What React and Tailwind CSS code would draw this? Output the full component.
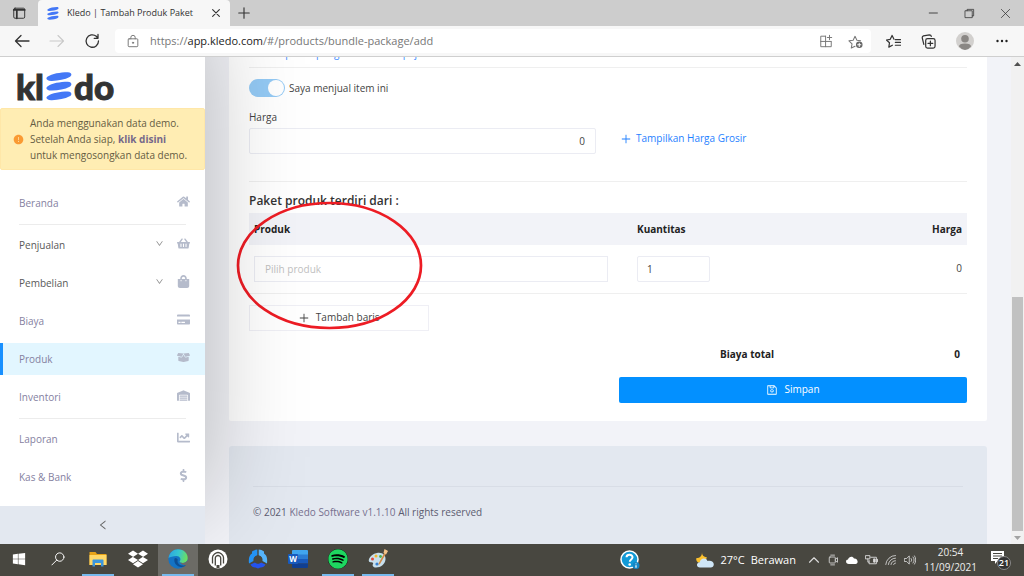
import { AiFillExclamationCircle, AiOutlineDown, AiOutlineLeft, AiOutlinePlus, AiOutlineSave } from 'react-icons/ai'
import {
  FaBoxOpen,
  FaChartLine,
  FaCreditCard,
  FaDollarSign,
  FaDropbox,
  FaHome,
  FaShoppingBag,
  FaShoppingBasket,
  FaSpotify,
  FaWarehouse,
  FaWindows,
} from 'react-icons/fa'

const NAV_GROUPS = [
  [{ label: 'Beranda', icon: FaHome }],
  [
    { label: 'Penjualan', icon: FaShoppingBasket, expandable: true },
    { label: 'Pembelian', icon: FaShoppingBag, expandable: true },
    { label: 'Biaya', icon: FaCreditCard },
    { label: 'Produk', icon: FaBoxOpen, active: true },
    { label: 'Inventori', icon: FaWarehouse },
  ],
  [
    { label: 'Laporan', icon: FaChartLine },
    { label: 'Kas & Bank', icon: FaDollarSign },
  ],
]

function KledoBars({ className }) {
  return (
    <svg className={className} viewBox="0 0 26 30" fill="#4478f6" aria-hidden="true">
      <path d="M1 5C6 1.500 14 .4 22 .2c4.500-.1 4.800 3.600 2 5C19 7.800 12 9.300 5 9.200-.2 9.100-1 6.600 1 5Z" />
      <path d="M1 15C6 11.500 14 10.400 22 10.200c4.500-.1 4.800 3.600 2 5C19 17.800 12 19.300 5 19.200-.2 19.100-1 16.600 1 15Z" />
      <path d="M1 25C6 21.500 14 20.400 22 20.200c4.500-.1 4.800 3.600 2 5C19 27.800 12 29.300 5 29.200-.2 29.100-1 26.600 1 25Z" />
    </svg>
  )
}

function LineIcon({ className = 'size-4', children }) {
  return (
    <svg className={className} viewBox="0 0 16 16" fill="none" stroke="currentColor" strokeWidth="1.1" strokeLinecap="round" strokeLinejoin="round" aria-hidden="true">
      {children}
    </svg>
  )
}

function TitleBar() {
  return (
    <div className="flex h-[26px] shrink-0 items-stretch bg-[#cdcdcd] text-[#333]">
      <button aria-label="Tab actions" className="flex w-[38px] items-center justify-center">
        <LineIcon className="size-[14px]">
          <rect x="2" y="2.500" width="12.500" height="11.500" rx="1.500" />
          <path d="M2 4.500h12.500M5.500 5v9" strokeWidth="2" />
        </LineIcon>
      </button>
      <div className="flex w-48 items-center rounded-t-[4px] bg-[#f7f7f7] pl-[9px] pr-2">
        <KledoBars className="h-[13px] w-3" />
        <span className="ml-2 flex-1 whitespace-nowrap text-[9px]">Kledo | Tambah Produk Paket</span>
        <button aria-label="Close tab">
          <LineIcon className="size-3">
            <path d="m3.500 3.500 9 9M12.500 3.500l-9 9" strokeWidth="1.500" />
          </LineIcon>
        </button>
      </div>
      <button aria-label="New tab" className="flex w-[27px] items-center justify-center">
        <LineIcon className="size-[14px]">
          <path d="M8 2v12M2 8h12" strokeWidth="1.300" />
        </LineIcon>
      </button>
      <div className="ml-auto flex">
        <button aria-label="Minimize" className="flex w-9 items-center justify-center">
          <LineIcon className="size-[10px]"><path d="M2 8h13" strokeWidth="1.400" /></LineIcon>
        </button>
        <button aria-label="Restore" className="flex w-9 items-center justify-center">
          <LineIcon className="size-[11px]">
            <rect x="2" y="4" width="10" height="10" />
            <path d="M4.500 4V2H14v9.500h-2" />
          </LineIcon>
        </button>
        <button aria-label="Close" className="flex w-[37px] items-center justify-center">
          <LineIcon className="size-[11px]"><path d="m2 2 12 12M14 2 2 14" /></LineIcon>
        </button>
      </div>
    </div>
  )
}

function Toolbar() {
  return (
    <div className="flex h-[31px] shrink-0 items-center border-b border-[#cfcfcf] bg-[#f7f7f7] text-[#333]">
      <div className="flex w-[115px] items-center gap-[19px] pl-[14px]">
        <button aria-label="Back">
          <LineIcon><path d="M15 8H2M7 2.500 1.500 8 7 13.500" strokeWidth="1.300" /></LineIcon>
        </button>
        <button aria-label="Forward" className="text-[#c9c9c9]">
          <LineIcon><path d="M1 8h13M9 2.500 14.500 8 9 13.500" /></LineIcon>
        </button>
        <button aria-label="Refresh">
          <LineIcon>
            <path d="M14.500 8a6.200 6.200 0 1 1-2.200-4.700L14 5.200M14 1.500v3.800h-3.800" strokeWidth="1.300" />
          </LineIcon>
        </button>
      </div>
      <div className="flex h-6 flex-1 items-center rounded-[4px] bg-white pl-[11px] pr-2 text-[#777]">
        <LineIcon className="size-[14px]">
          <rect x="2.500" y="5.500" width="11" height="9" rx="1" />
          <path d="M5.500 5.500V4a2.500 2.500 0 0 1 5 0v1.500" />
          <circle cx="8" cy="10" r=".7" fill="currentColor" />
        </LineIcon>
        <span className="ml-[10px] flex-1 whitespace-nowrap text-[11px]">
          https://<span className="text-[#222]">app.kledo.com</span>/#/products/bundle-package/add
        </span>
        <button aria-label="Install app">
          <LineIcon className="size-[14px]">
            <path d="M7.500 2.500h-5.500v12h12V9M2 8.500h12M7.500 2.500v12M12 1.500v5M9.500 4h5" />
          </LineIcon>
        </button>
        <button aria-label="Add to favorites" className="ml-[15px]">
          <LineIcon className="size-[15px]">
            <path d="M7.500 13 3.500 15l.8-4.500L1 7.300l4.500-.7 2-4.100 2 4.100 4 .6" />
            <circle cx="12" cy="11.500" r="3.500" fill="#666" stroke="none" />
            <path d="M12 9.800v3.400M10.300 11.500h3.400" stroke="#fff" />
          </LineIcon>
        </button>
      </div>
      <div className="flex items-center pl-[15px] pr-4">
        <button aria-label="Favorites">
          <LineIcon className="size-[15px]">
            <path d="M8.500 5.500 6.500 1.500l-2 4.200-4 .7 3.200 3-.7 4.600 3.800-2M10 6h5.500M10 9h5.500M10 12h5.500" strokeWidth="1.300" />
          </LineIcon>
        </button>
        <button aria-label="Collections" className="ml-5">
          <LineIcon className="size-[15px]">
            <rect x="5" y="5" width="10" height="10" rx="2" strokeWidth="1.300" />
            <path d="M10 7.500v5M7.500 10h5M3 11 1.300 4A2 2 0 0 1 2.600 2L9 1c1 0 1.800.5 2 1.600" strokeWidth="1.300" />
          </LineIcon>
        </button>
        <button aria-label="Profile" className="ml-5">
          <svg className="size-[18px]" viewBox="0 0 18 18" aria-hidden="true">
            <circle cx="9" cy="9" r="9" fill="#d2d0ce" />
            <circle cx="9" cy="6.800" r="3.800" fill="#8a8784" />
            <path d="M3 14.500c0-2 2-3 6-3s6 1 6 3A9 9 0 0 1 9 18a9 9 0 0 1-6-3.500Z" fill="#8a8784" />
          </svg>
        </button>
        <button aria-label="Settings" className="ml-[22px]">
          <svg className="h-3 w-3" viewBox="0 0 12 12" fill="#222" aria-hidden="true">
            <circle cx="1.500" cy="6" r="1.200" />
            <circle cx="6" cy="6" r="1.200" />
            <circle cx="10.500" cy="6" r="1.200" />
          </svg>
        </button>
      </div>
    </div>
  )
}

function NavItem({ item }) {
  const Icon = item.icon
  return (
    <li>
      <a
        href="#"
        className={`flex h-8 items-center border-l-[3px] pl-4 pr-[15px] ${
          item.active ? 'border-[#1890ff] bg-[#e2f6ff]' : 'border-transparent'
        } ${item.expandable ? 'text-[#595959]' : 'text-[#85819f]'}`}
      >
        <span className="flex-1">{item.label}</span>
        {item.expandable && <AiOutlineDown className="mr-[13px] mb-1 size-[9px] text-[#888]" />}
        <Icon className="mb-1 size-[13px] text-[#b5bbcb]" />
      </a>
    </li>
  )
}

function Sidebar() {
  return (
    <aside className="relative z-10 flex w-[205px] shrink-0 flex-col bg-white shadow-[0_-40px_100px_rgba(0,0,0,0.26)]">
      <a href="#" aria-label="kledo" className="flex h-[51px] items-center pl-4 pt-2 font-[Lato] text-[35px] leading-none font-black text-[#333] [-webkit-text-stroke:1px_#333]">
        kl
        <KledoBars className="mx-[2px] h-[29px] w-[26px]" />
        do
      </a>
      <div className="flex items-center rounded-[2px] border border-[#ffe7a8] bg-[#ffedb3] py-[6px] pl-3 text-[#655c43]">
        <AiFillExclamationCircle className="size-[11px] shrink-0 text-[#fa9a33]" />
        <p className="ml-[6px] leading-4 whitespace-nowrap">
          Anda menggunakan data demo.
          <br />
          Setelah Anda siap, <a href="#" className="font-bold text-[#75698a]">klik disini</a>
          <br />
          untuk mengosongkan data demo.
        </p>
      </div>
      <nav className="flex-1 pt-[17px]">
        {NAV_GROUPS.map((group, i) => (
          <div key={i}>
            {i > 0 && <hr className="mx-[19px] mt-[5px] mb-1 border-[#ececec]" />}
            <ul className="flex flex-col gap-[6px]">
              {group.map(item => (
                <NavItem key={item.label} item={item} />
              ))}
            </ul>
          </div>
        ))}
      </nav>
      <button aria-label="Collapse menu" className="flex h-[38px] items-center justify-center bg-[#e3e8f0] text-[#666]">
        <AiOutlineLeft className="size-3" />
      </button>
    </aside>
  )
}

function BundleForm() {
  return (
    <form className="rounded-b-[2px] bg-white px-5 pb-[18px]" onSubmit={e => e.preventDefault()}>
      <a href="#" className="-mt-3 block h-[23px] border-b border-[#efefef] pl-4 leading-4 text-[#3b8bff]">
        Tampilkan pengaturan untuk pajak
      </a>
      <label className="mt-[11px] flex items-center gap-1">
        <input type="checkbox" role="switch" defaultChecked className="peer sr-only" />
        <span className="flex h-[18px] w-9 items-center justify-end rounded-full bg-[#94caf5] p-px">
          <span className="size-4 rounded-full bg-white" />
        </span>
        Saya menjual item ini
      </label>
      <div className="mt-3 grid grid-cols-2 gap-6">
        <div>
          <label htmlFor="price" className="block leading-4">Harga</label>
          <input id="price" defaultValue="0" className="mt-[3px] block h-[26px] w-full rounded-[2px] border border-[#ebecf3] bg-transparent px-[10px] text-right" />
        </div>
        <button type="button" className="flex items-center gap-1 self-end pb-2 text-[#1f7fff]">
          <AiOutlinePlus className="size-3" />
          Tampilkan Harga Grosir
        </button>
      </div>
      <hr className="mt-[27px] border-[#efefef]" />
      <h2 className="mt-[9px] text-[12px] leading-5 font-semibold text-[#333]">Paket produk terdiri dari :</h2>
      <table className="mt-[2px] w-full table-fixed">
        <thead>
          <tr className="h-8 bg-[#f2f3f8] text-[#222]">
            <th className="w-[383px] px-[5px] text-left">Produk</th>
            <th className="px-[5px] text-left">Kuantitas</th>
            <th className="px-[5px] text-right">Harga</th>
          </tr>
        </thead>
        <tbody>
          <tr className="h-12 border-b border-[#efefef]">
            <td className="pl-[5px] pr-6">
              <input aria-label="Produk" placeholder="Pilih produk" className="block h-[26px] w-full border border-[#ebecf3] bg-transparent px-[10px] placeholder:text-[#bfbfbf]" />
            </td>
            <td className="px-[5px]">
              <input aria-label="Kuantitas" defaultValue="1" className="block h-[26px] w-[73px] rounded-[2px] border border-[#ebecf3] px-[9px]" />
            </td>
            <td className="px-[5px] text-right">0</td>
          </tr>
        </tbody>
      </table>
      <button type="button" className="mt-[11px] flex h-[26px] w-1/4 items-center justify-center gap-[6px] border border-[#efeff5]">
        <AiOutlinePlus className="size-3" />
        Tambah baris
      </button>
      <div className="ml-auto w-[348px]">
        <div className="mt-[15px] flex justify-between pl-[101px] pr-[7px] leading-4 font-bold text-[#222]">
          <span>Biaya total</span>
          <span>0</span>
        </div>
        <button className="mt-[15px] flex h-[26px] w-full items-center justify-center gap-[6px] rounded-[2px] bg-[#0390ff] text-white">
          <AiOutlineSave className="size-3" />
          Simpan
        </button>
      </div>
    </form>
  )
}

function Scrollbar() {
  return (
    <div className="flex w-[13px] shrink-0 flex-col items-center bg-[#f1f1f1]">
      <svg className="h-[13px] w-[7px]" viewBox="0 0 7 13" aria-hidden="true"><path d="M0 9h7L3.500 5Z" fill="#505050" /></svg>
      <div className="flex-1" />
      <div className="h-[48%] w-[11px] bg-[#c1c1c1]" />
      <svg className="h-[13px] w-[7px]" viewBox="0 0 7 13" aria-hidden="true"><path d="M0 5h7L3.500 9Z" fill="#a3a3a3" /></svg>
    </div>
  )
}

function EdgeIcon() {
  return (
    <svg className="size-5" viewBox="0 0 20 20" aria-hidden="true">
      <defs>
        <linearGradient id="edge-top" x1="0" x2="1" y1=".3" y2=".5">
          <stop offset="0" stopColor="#2da5e0" />
          <stop offset=".5" stopColor="#36c6d0" />
          <stop offset="1" stopColor="#6fe05a" />
        </linearGradient>
      </defs>
      <circle cx="10" cy="10" r="9.700" fill="#1473c4" />
      <path d="M.5 9C1.500 3.500 5.500.3 10 .3c6 0 9.700 4.200 9.700 8.700 0 3.500-2.500 5-5 5-2 0-3.500-.8-3-1.700 1.700-2 .3-5.300-3.200-5.300-3.500 0-6.500 1-8 2Z" fill="url(#edge-top)" />
      <path d="M6.500 9.500c-1 4 2 8.500 7 8.500 2 0 3.700-1 4.500-2-1 .5-2.500.9-4.300.5-3.200-.6-4.900-3.300-3.900-5.700C9 9 7.500 8.300 6.500 9.500Z" fill="#0d4f94" />
      <path d="M11.700 12.300c-.5.900 1 1.700 3 1.700 1.500 0 3.400-.8 4.300-2h1v2.500l-2.300 1.500c-2.500.5-5.500-.7-6-3.700Z" fill="#6c6b66" />
    </svg>
  )
}

function FolderIcon() {
  return (
    <svg className="h-4 w-[18px]" viewBox="0 0 18 16" aria-hidden="true">
      <path d="M.5 1h6l1.500 2h9.500v11H.5Z" fill="#e8a317" />
      <path d="M.5 4h17v10H.5Z" fill="#ffd868" />
      <path d="M3.500 15.500V9.500c0-.6.400-1 1-1h9c.6 0 1 .4 1 1v6H12v-3.500H6v3.500Z" fill="#3c96dc" />
    </svg>
  )
}

function WordIcon() {
  return (
    <svg className="h-[18px] w-5" viewBox="0 0 20 18" aria-hidden="true">
      <path d="M5 0h14a1 1 0 0 1 1 1v4H4V1a1 1 0 0 1 1-1Z" fill="#41a5ee" />
      <path d="M4 4.500h16V9H4Z" fill="#2b7cd3" />
      <path d="M4 9h16v4.500H4Z" fill="#185abd" />
      <path d="M4 13.500h16V17a1 1 0 0 1-1 1H5a1 1 0 0 1-1-1Z" fill="#103f91" />
      <rect y="4" width="10" height="10" rx="1" fill="#185abd" />
      <text x="5" y="12" textAnchor="middle" fill="#fff" fontSize="8" fontWeight="700" fontFamily="Open Sans">W</text>
    </svg>
  )
}

function PaletteIcon() {
  return (
    <svg className="size-5" viewBox="0 0 20 20" aria-hidden="true">
      <path d="M9 4c5-1 9 2 8.500 6.500C17 15 13 18.500 8 18.500c-3 0-4-2-3-3.500.7-1.200-.5-2-2-1.800C1 13.500.3 12 1 10c1-3 4-5.300 8-6Z" fill="#c7dfec" />
      <circle cx="4.500" cy="10" r="1.500" fill="#e2483d" />
      <circle cx="8" cy="7" r="1.500" fill="#f4b52d" />
      <circle cx="12.500" cy="7.500" r="1.400" fill="#4caf50" />
      <circle cx="9" cy="15" r="1.600" fill="#367fd0" />
      <path d="m18 1 1.500 1-7.500 13-1.500 1 .3-2Z" fill="#d38b45" />
      <path d="M16.500 0 20 2l-2 3.500-2.500-1.500Z" fill="#f1c28a" />
    </svg>
  )
}

const TASKS = [
  { label: 'Start', icon: <FaWindows className="size-[14px]" /> },
  {
    label: 'Search',
    icon: (
      <LineIcon className="size-[14px]">
        <circle cx="10" cy="5.800" r="4.800" />
        <path d="m6.500 9.300-5.500 5.500" />
      </LineIcon>
    ),
  },
  { label: 'File Explorer', icon: <FolderIcon />, open: true },
  { label: 'Dropbox', icon: <FaDropbox className="size-5" /> },
  { label: 'Edge', icon: <EdgeIcon />, open: true, active: true },
  {
    label: 'Home app',
    icon: (
      <svg className="size-5" viewBox="0 0 20 20" fill="none" aria-hidden="true">
        <circle cx="10" cy="10" r="9.500" fill="#fff" />
        <path d="M4.500 14.500V8.500C4.500 6 8 3.500 10 3.500s5.500 2.500 5.500 5v6" stroke="#484740" strokeWidth="1.300" />
        <path d="M7.300 16.500V9c0-1.400 1.600-2.500 2.700-2.500S12.700 7.600 12.700 9v7.500" stroke="#484740" strokeWidth="1.300" />
        <path d="M8.500 19v-3h3v3Z" fill="#484740" />
      </svg>
    ),
  },
  {
    label: 'Hub',
    icon: (
      <svg className="size-5" viewBox="0 0 20 20" aria-hidden="true">
        <path d="M9.300.5v5.700A5 5 0 0 0 5.500 12L1 14.500C.3 9 1.500 6 4 4.500V2.500C5.500 1.300 7.500.5 9.300.5Z" fill="#2493f5" />
        <path d="M10.700.5v5.700a5 5 0 0 1 3.800 5.800l4.500 2.500c.7-5.500-.5-8.500-3-10V2.500C14.500 1.300 12.500.5 10.700.5Z" fill="#55b4fb" />
        <path d="m2.500 15.500 4.500-2c2 1.600 4 1.600 6 0l4.500 2c-1 2-3 3.200-5 3l-2.500 1-2.500-1c-2 .2-4-1-5-3Z" fill="#2453ee" />
        <circle cx="10" cy="10.500" r="3.800" fill="#484740" />
      </svg>
    ),
  },
  { label: 'Word', icon: <WordIcon /> },
  {
    label: 'Spotify',
    icon: (
      <span className="rounded-full bg-black">
        <FaSpotify className="size-5 text-[#1ed760]" />
      </span>
    ),
    open: true,
  },
  { label: 'Paint', icon: <PaletteIcon />, open: true },
]

function Taskbar() {
  return (
    <footer className="flex h-8 shrink-0 bg-[#484740] text-white">
      {TASKS.map(task => (
        <button
          key={task.label}
          aria-label={task.label}
          className={`flex w-10 items-center justify-center first:w-[38px] ${task.active ? 'bg-[#6c6b66]' : ''}`}
        >
          <span className={`flex h-full w-8 items-center justify-center border-b-2 ${task.open ? 'border-[#76b9ed]' : 'border-transparent'}`}>
            {task.icon}
          </span>
        </button>
      ))}
      <div className="ml-auto flex items-center">
        <button aria-label="Help" className="mr-14">
          <svg className="size-5" viewBox="0 0 20 20" aria-hidden="true">
            <circle cx="9.500" cy="9.500" r="8.500" fill="#129ad7" stroke="#fff" strokeWidth="1.500" />
            <path d="M6.500 7.300c.2-3.500 6.300-3.300 6 .2-.2 2-2.700 2-2.700 4.300" fill="none" stroke="#fff" strokeWidth="2" />
            <circle cx="9.700" cy="14.500" r="1.300" fill="#fff" />
            <circle cx="16" cy="15.500" r="3.500" fill="#1486c4" />
            <path d="M16 13.500v.8M16 15.300v2.500" stroke="#fff" strokeWidth="1.200" />
          </svg>
        </button>
        <button className="flex items-center text-[11px] whitespace-nowrap">
          <svg className="mr-[6px] h-4 w-[18px]" viewBox="0 0 18 16" aria-hidden="true">
            <path d="M6 0c-.3 3 1.500 5 5 5.500L8 11l-6-.5C0 9 0 7 .5 6 4 6 6 4 6 0Z" fill="#fbc02d" />
            <path d="M4 15.500c-4 0-4-5-.2-5.200C4.500 6 10 5.300 11.500 9c3-1 6.500.5 6.300 3.500-.1 2-1.300 3-3 3Z" fill="#cfe6f7" />
          </svg>
          27°C
          <span className="ml-[6px]">Berawan</span>
        </button>
        <div className="ml-3 flex items-center gap-[7px] text-[#ddd]">
          <LineIcon className="size-3"><path d="m2 11 6-6 6 6" strokeWidth="1.500" /></LineIcon>
          <LineIcon className="size-3">
            <rect x="3" y="4" width="8" height="8" rx="1" />
            <path d="m11 7 3-2v6l-3-2M5 1.500h5M5 14.500h5" />
          </LineIcon>
          <svg className="h-2 w-3" viewBox="0 0 12 8" fill="#fff" aria-hidden="true">
            <path d="M3 8C-.8 8-.7 3.500 2 3.500 3 0 7 0 8 2.500c4-.5 5 5.500 1.500 5.500Z" />
          </svg>
          <LineIcon className="size-[13px]">
            <path d="M1 2h5v4H1ZM3.500 6v4H5M7 4h7v8H5V8" />
            <path d="M14.500 6.500h1v3h-1M11 6h1.500v4H11Z" fill="currentColor" />
          </LineIcon>
          <LineIcon className="size-3">
            <path d="M1 14A13 13 0 0 1 14 2M4.500 14A9.500 9.500 0 0 1 14 5.500M8 14a6 6 0 0 1 6-5M11.500 14a2.500 2.500 0 0 1 2.500-2" />
          </LineIcon>
          <LineIcon className="size-3">
            <path d="M1 6h2.500L7 2.500v11L3.500 10H1ZM9.500 6c1 1.300 1 2.700 0 4M12 4c2 2.500 2 5.500 0 8M14 2.500c2.300 3.500 2.300 7.500 0 11" />
          </LineIcon>
        </div>
        <time className="ml-2 text-center text-[10px] leading-[15px] text-[#eee]">
          20:54
          <br />
          11/09/2021
        </time>
        <button aria-label="Notifications" className="relative mr-5 ml-[14px] pb-[6px]">
          <svg className="h-[13px] w-[13px]" viewBox="0 0 13 13" aria-hidden="true">
            <path d="M0 0h13v10H6.500L4 13v-3H0Z" fill="#fff" />
            <path d="M2 2.500h9M2 5h9M2 7.500h5" stroke="#484740" />
          </svg>
          <span className="absolute top-[5px] left-[6px] flex size-[14px] items-center justify-center rounded-full border border-[#888] bg-[#333] text-[9px] font-semibold">
            21
          </span>
        </button>
      </div>
    </footer>
  )
}

export default function App() {
  return (
    <div className="flex h-screen flex-col overflow-hidden font-['Open_Sans','Noto_Sans',sans-serif] text-[10px] text-[#444]">
      <TitleBar />
      <Toolbar />
      <div className="relative flex min-h-0 flex-1 overflow-hidden bg-[#f2f3f8]">
        <Sidebar />
        <main className="relative flex min-w-0 flex-1 flex-col overflow-hidden px-6">
          <BundleForm />
          <div className="mt-[25px] flex-1 rounded-t-[3px] bg-[#e3e8f0] px-6 pt-10 text-[#5c5c70]">
            <hr className="border-[#d8dde6]" />
            <p className="mt-[17px] leading-4">
              © 2021 <a href="#" className="text-[#76708f]">Kledo Software v1.1.10</a> All rights reserved
            </p>
          </div>
          {/* marker around the product picker */}
          <svg className="pointer-events-none absolute top-[144px] left-[31px] h-[130px] w-[188px]" viewBox="0 0 188 130" fill="none" aria-hidden="true">
            <ellipse cx="93.500" cy="64.500" rx="91.500" ry="62.500" stroke="#ed1c24" strokeWidth="2.700" />
          </svg>
        </main>
        <Scrollbar />
      </div>
      <Taskbar />
    </div>
  )
}
